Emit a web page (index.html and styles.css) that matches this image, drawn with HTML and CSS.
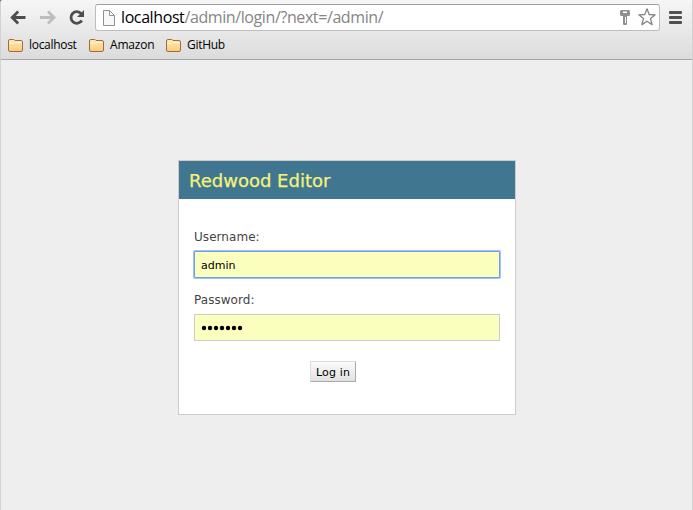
FILE: index.html
```html
<!DOCTYPE html>
<html lang="en">
<head>
<meta charset="utf-8">
<title>Log in | Redwood Editor</title>
<link rel="stylesheet" href="styles.css">
</head>
<body>
<header class="chrome">
  <div class="toolbar">
    <svg class="nav" width="88" height="20" viewBox="0 0 88 20" fill="none" stroke-width="2.8">
      <path d="M25.500 9.500H12.800M18.200 3.500l-6 6 6 6" stroke="#4d4d4d"/>
      <path d="M40 9.500h13.500M48 3.500l6 6-6 6" stroke="#bdbdbd"/>
      <path d="M81.200 5.700A5.800 5.800 0 1 0 81.800 12.500" stroke="#4d4d4d"/>
      <path d="M84 2v7h-7z" fill="#4d4d4d"/>
    </svg>
    <div class="omnibox">
      <svg class="page" width="12" height="16" viewBox="0 0 12 16" fill="#f8f8f8" stroke="#909090"><path d="M.5.500h6l5 5v10H.5zM6.500.500v5h5"/></svg>
      <span class="url"><b>localhost</b>/admin/login/?next=/admin/</span>
      <svg class="key" width="10" height="15" viewBox="0 0 10 15"><path fill="#909090" fill-rule="evenodd" d="M1.500 0h7Q10 0 10 1.500v3Q10 6 8.500 6H7v8q0 1-1 1H4q-1 0-1-1V6H1.500Q0 6 0 4.500v-3Q0 0 1.500 0zM3 1.500V3h4V1.500zM5 7v6h1V7z"/></svg>
      <svg class="star" width="18" height="18" viewBox="0 0 18 18"><path fill="#fff" stroke="#858585" stroke-width="1.300" stroke-linejoin="round" d="M9 .8l2.200 5.700 6 .3-4.700 3.800 1.600 6L9 13.200l-5.100 3.400 1.600-6L.8 6.800l6-.3z"/></svg>
    </div>
    <svg class="menu" width="13" height="13" viewBox="0 0 13 13" fill="#505050"><rect width="13" height="3" rx="1"/><rect y="5" width="13" height="3" rx="1"/><rect y="10" width="13" height="3" rx="1"/></svg>
  </div>
  <svg class="defs" width="0" height="0">
    <linearGradient id="fill" x2="0" y2="1"><stop stop-color="#ffebba"/><stop offset="1" stop-color="#fcca75"/></linearGradient>
    <symbol id="folder" viewBox="0 0 15 13"><path d="M.5 11V2Q.5.500 2 .5h3.500Q6.500.500 7 1.500h6q1.500 0 1.500 1.500v8q0 1.500-1.500 1.500H2Q.5 12.500.5 11z" fill="url(#fill)" stroke="#98703f"/><path d="M1.500 4.500h4.500l1-1h6.500" fill="none" stroke="#fff3d2"/></symbol>
  </svg>
  <nav class="bookmarks">
    <a class="bm1"><svg width="15" height="13"><use href="#folder"/></svg><span>localhost</span></a>
    <a class="bm2"><svg width="15" height="13"><use href="#folder"/></svg><span>Amazon</span></a>
    <a class="bm3"><svg width="15" height="13"><use href="#folder"/></svg><span>GitHub</span></a>
  </nav>
</header>
<main class="page-body">
  <section class="login">
    <h1>Redwood Editor</h1>
    <form>
      <label for="user">Username:</label>
      <input class="focused" id="user" type="text" value="admin">
      <label for="pass">Password:</label>
      <div class="field" id="pass"><svg width="42" height="6" viewBox="0 0 42 6"><g fill="#000"><circle cx="3" cy="3" r="2.200"/><circle cx="9" cy="3" r="2.200"/><circle cx="15" cy="3" r="2.200"/><circle cx="21" cy="3" r="2.200"/><circle cx="27" cy="3" r="2.200"/><circle cx="33" cy="3" r="2.200"/><circle cx="39" cy="3" r="2.200"/></g></svg></div>
      <button type="button">Log in</button>
    </form>
  </section>
</main>
</body>
</html>
```
FILE: styles.css
```css
* { box-sizing: border-box; }
html { background: #4a6fb5; }
body { margin: 0; height: 510px; overflow: hidden; background: #eee; font-family: "DejaVu Sans", sans-serif; display: flex; flex-direction: column; border: solid #d2d2d2; border-width: 0 1px; border-radius: 3px 0 0 0; }
.chrome { height: 60px; flex: none; margin: 0 -1px; background: linear-gradient(#f6f6f6, #dcdcdc 58px); border-bottom: 1px solid #a5a5a5; font-family: "Open Sans", sans-serif; }
.toolbar { display: flex; height: 35px; padding-top: 4px; }
.nav { margin-top: 4px; flex: none; }
.omnibox { display: flex; width: 565px; height: 27px; margin-left: 7px; background: #fff; border: 1px solid #bdbdbd; border-top-color: #a0a0a0; border-radius: 3px; }
.page { margin: 5px 0 0 7px; }
.url { margin-left: 6px; font-size: 16px; line-height: 25px; color: #858585; letter-spacing: -0.4px; white-space: nowrap; }
.url b { font-weight: 400; color: #000; }
.key { margin: 5px 1px 0 auto; }
.star { margin: 3px 3px 0 7px; }
.menu { margin: 7px 0 0 9px; }
.defs { position: absolute; }
.bookmarks { display: flex; height: 20px; padding-left: 8px; font-size: 12px; line-height: 20px; color: #000; letter-spacing: -0.3px; }
.bookmarks a { display: flex; align-items: center; gap: 6px; white-space: nowrap; }
.bm1 { width: 81px; }
.bm2 { width: 77px; }
.bm2 span { letter-spacing: -0.2px; }
.page-body { padding: 100px 0 0 177px; }
.login { width: 338px; height: 255px; background: #fff; border: 1px solid #ccc; }
h1 { margin: 0; height: 38px; padding: 1px 0 0 10px; background: #417690; color: #f4f379; font-size: 18px; line-height: 38px; font-weight: 400; -webkit-text-stroke: 0.25px #f4f379; }
form { display: flex; flex-direction: column; padding: 28px 15px 0; }
label { height: 20px; font-size: 12px; line-height: 20px; color: #444; letter-spacing: 0.05px; }
input, .field { height: 27px; margin: 4px 0 12px; padding: 1px 6px 0; border: 1px solid #ccc; background: #faffbd; font: 11px "DejaVu Sans", sans-serif; color: #000; outline: none; }
.focused { border-color: #6f9fe8; box-shadow: 0 0 0 1px #a0c1f7; border-radius: 1px; }
.field { display: flex; align-items: center; padding-top: 0; }
button { width: 46px; height: 21px; margin: 8px 0 0 116px; padding: 1px 0 0; border: 1px solid; border-color: #ddd #aaa #aaa #ddd; background: linear-gradient(#fafafa, #e2e2e2); font: 11px "DejaVu Sans", sans-serif; letter-spacing: 0.15px; color: #000; white-space: nowrap; }
```
